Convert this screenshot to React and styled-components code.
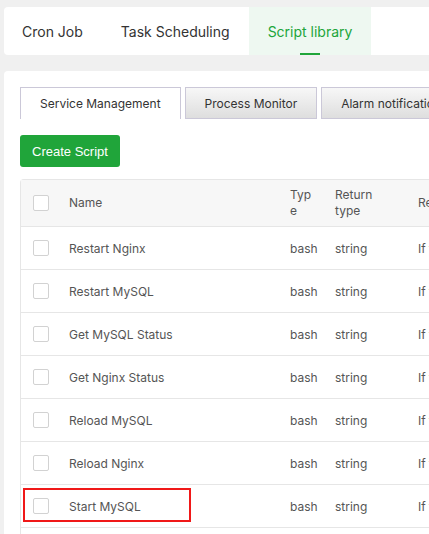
import React from 'react';
import styled, { createGlobalStyle } from 'styled-components';

const GlobalStyle = createGlobalStyle`
	html, body {
		margin: 0;
		padding: 0;
		background: #f0f0f0;
		overflow: hidden;
	}
	body {
		font-family: "Inter", "Noto Sans", sans-serif;
	}
`

const rows = [
	'Restart Nginx',
	'Restart MySQL',
	'Get MySQL Status',
	'Get Nginx Status',
	'Reload MySQL',
	'Reload Nginx',
	'Start MySQL',
	'Stop MySQL',
];

const columns = '36px 221px 45px 83px 200px';

function App() {
	return (
		<Page>
			<GlobalStyle />
			<TopCard>
				<TopTab>Cron Job</TopTab>
				<TopTab>Task Scheduling</TopTab>
				<TopTab active>Script library</TopTab>
			</TopCard>
			<MainCard>
				<SubTabs>
					<SubTab active>Service Management</SubTab>
					<SubTab>Process Monitor</SubTab>
					<SubTab>Alarm notification</SubTab>
				</SubTabs>
				<CreateButton>Create Script</CreateButton>
				<Table>
					<HeadRow>
						<CheckCell><Check /></CheckCell>
						<HeadCell>Name</HeadCell>
						<HeadCell breakAll>Type</HeadCell>
						<HeadCell>Return type</HeadCell>
						<HeadCell>Remark</HeadCell>
					</HeadRow>
					{rows.map(name => (
						<Row key={name}>
							<CheckCell><Check /></CheckCell>
							<Cell>{name}</Cell>
							<Cell>bash</Cell>
							<Cell>string</Cell>
							<Cell>If the script returns</Cell>
							{name === 'Start MySQL' && <Highlight />}
						</Row>
					))}
				</Table>
			</MainCard>
		</Page>
	);
}

export default App;

const Page = styled.div`
	width: 640px;
	padding: 7px 0 0 4px;
	display: flex;
	flex-direction: column;
	gap: 16px;
`

const TopCard = styled.div`
	display: flex;
	height: 48px;
	background: #fff;
	border-radius: 4px;
`

const TopTab = styled.div`
	position: relative;
	display: flex;
	align-items: center;
	padding: 0 19px 0 19px;
	font-size: 14px;
	color: ${p => (p.active ? '#20a53a' : '#333')};
	background: ${p => (p.active ? '#eef8f1' : 'transparent')};

	&:first-child {
		padding-left: 18px;
	}

	&::after {
		content: '';
		display: ${p => (p.active ? 'block' : 'none')};
		position: absolute;
		left: 50%;
		bottom: 0;
		width: 20px;
		height: 2px;
		margin-left: -10px;
		background: #20a53a;
	}
`

const MainCard = styled.div`
	background: #fff;
	border-radius: 4px;
	padding: 16px;
	display: flex;
	flex-direction: column;
	align-items: flex-start;
	min-height: 600px;
`

const SubTabs = styled.div`
	display: flex;
	gap: 4px;
	margin-bottom: 16px;
`

const SubTab = styled.div`
	height: 32px;
	box-sizing: border-box;
	padding: 0 19px;
	display: flex;
	align-items: center;
	font-size: 12px;
	color: #333;
	white-space: nowrap;
	border: 1px solid #cbc8d8;
	border-bottom: ${p => (p.active ? 'none' : '1px solid #cbc8d8')};
	background: ${p => (p.active ? '#fff' : 'linear-gradient(#f7f7f7, #dedede)')};
`

const CreateButton = styled.button`
	height: 32px;
	padding: 0 12px;
	border: none;
	border-radius: 3px;
	background: #20a53a;
	color: #fff;
	font-family: "Liberation Sans", Arial, sans-serif;
	font-size: 13px;
	margin-bottom: 12px;
`

const Table = styled.div`
	border: 1px solid #e6e6e6;
	border-right: none;
	border-radius: 4px 0 0 0;
`

const HeadRow = styled.div`
	display: grid;
	grid-template-columns: ${columns};
	height: 46px;
	background: #f7f7f7;
	border-bottom: 1px solid #e6e6e6;
`

const Row = styled.div`
	position: relative;
	display: grid;
	grid-template-columns: ${columns};
	height: 42px;
	border-bottom: 1px solid #e6e6e6;
`

const CheckCell = styled.div`
	display: flex;
	align-items: center;
	padding-left: 12px;
`

const Check = styled.span`
	width: 16px;
	height: 16px;
	box-sizing: border-box;
	border: 1px solid #d2d2d2;
	border-radius: 2px;
	background: #fff;
`

const HeadCell = styled.div`
	display: flex;
	align-items: center;
	padding: 0 10px 0 12px;
	font-size: 12px;
	line-height: 16px;
	color: #555;
	word-break: ${p => (p.breakAll ? 'break-all' : 'normal')};
	overflow: hidden;
`

const Cell = styled.div`
	display: flex;
	align-items: center;
	padding: 0 12px;
	font-size: 12px;
	color: #555;
	white-space: nowrap;
`

const Highlight = styled.div`
	position: absolute;
	left: 2px;
	top: 3px;
	width: 168px;
	height: 34px;
	box-sizing: border-box;
	border: 2px solid #f01818;
	pointer-events: none;
`
